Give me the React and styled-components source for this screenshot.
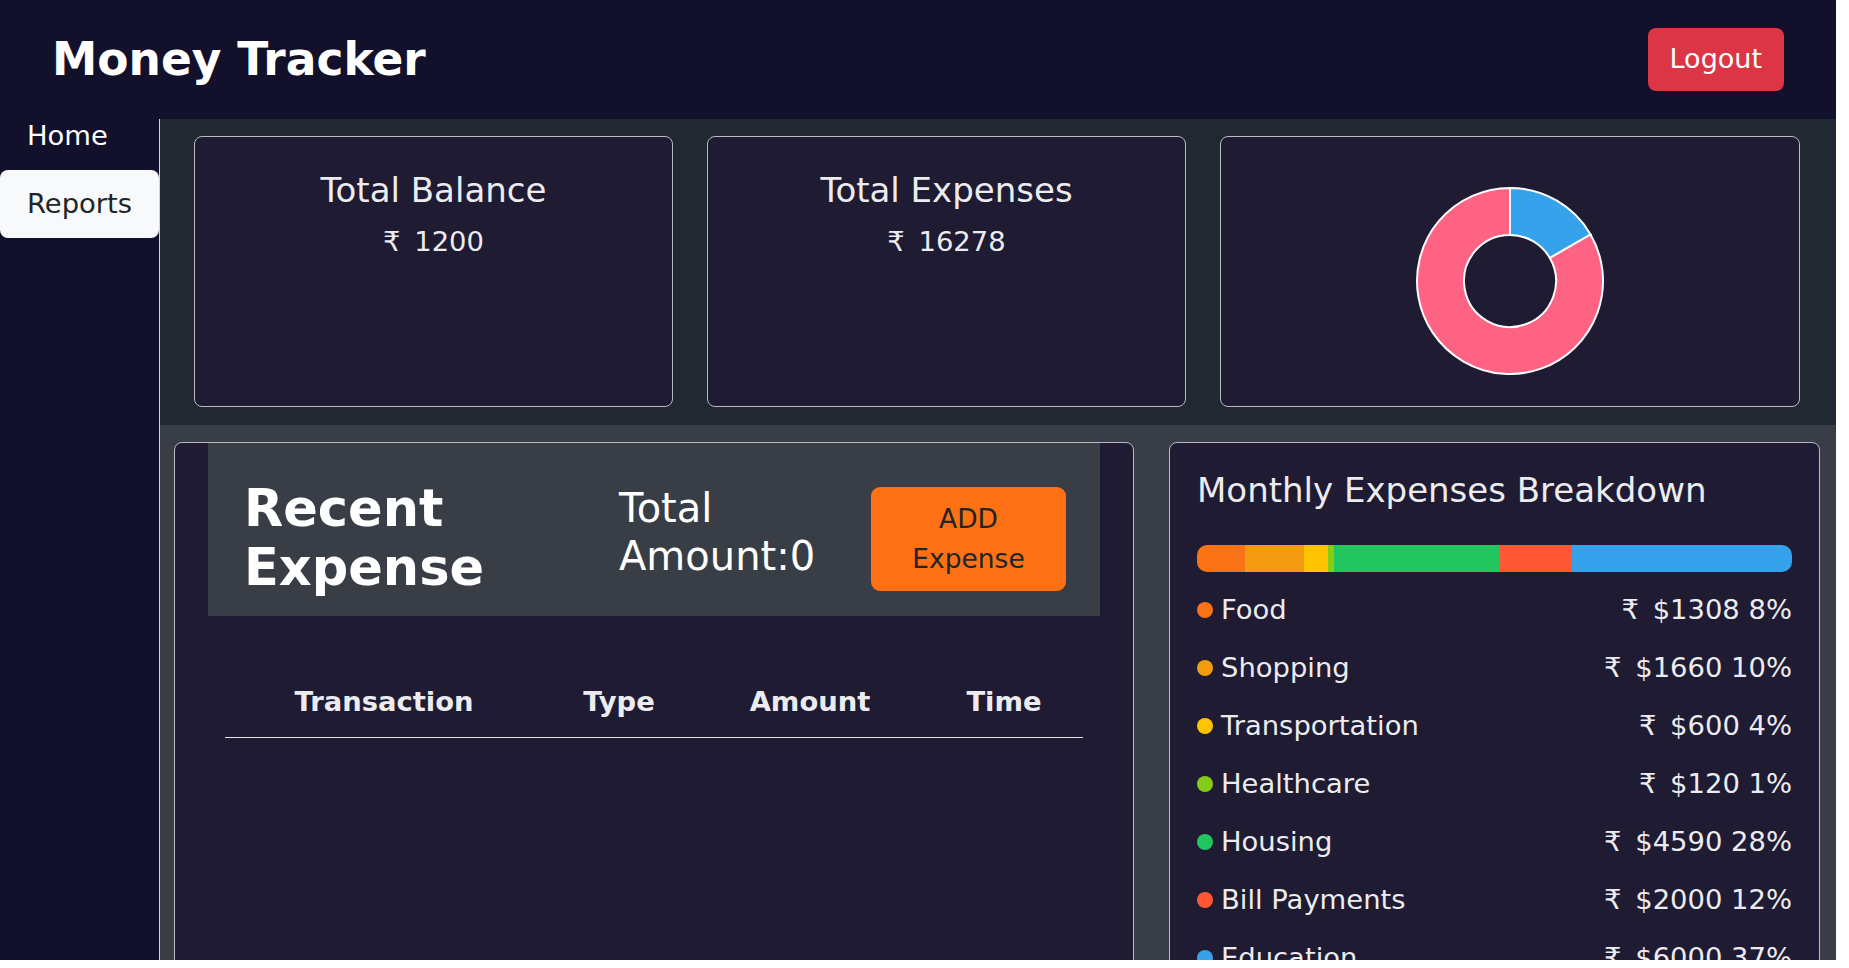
import React from "react";
import styled, { createGlobalStyle } from "styled-components";

const categories = [
  { name: "Food", amount: 1308, pct: 8, color: "#f97316" },
  { name: "Shopping", amount: 1660, pct: 10, color: "#f39c12" },
  { name: "Transportation", amount: 600, pct: 4, color: "#ffc300" },
  { name: "Healthcare", amount: 120, pct: 1, color: "#84cc16" },
  { name: "Housing", amount: 4590, pct: 28, color: "#22c55e" },
  { name: "Bill Payments", amount: 2000, pct: 12, color: "#ff5733" },
  { name: "Education", amount: 6000, pct: 37, color: "#36a2eb" },
];

const donut = [
  { value: 1200, color: "#36a2eb" },
  { value: 6000, color: "#ff6384" },
];

const GlobalStyle = createGlobalStyle`
  body {
    margin: 0;
    background: #ffffff;
    font-family: "DejaVu Sans", Verdana, sans-serif;
    font-size: 27.4px;
  }
  * { box-sizing: border-box; }
`;

function point(cx, cy, r, deg) {
  const a = (deg * Math.PI) / 180;
  return [cx + r * Math.sin(a), cy - r * Math.cos(a)];
}

function arcPath(cx, cy, R, r, start, end) {
  const large = end - start > 180 ? 1 : 0;
  const [x1, y1] = point(cx, cy, R, start);
  const [x2, y2] = point(cx, cy, R, end);
  const [x3, y3] = point(cx, cy, r, end);
  const [x4, y4] = point(cx, cy, r, start);
  return `M${x1} ${y1} A${R} ${R} 0 ${large} 1 ${x2} ${y2} L${x3} ${y3} A${r} ${r} 0 ${large} 0 ${x4} ${y4} Z`;
}

function Doughnut() {
  const total = donut.reduce((s, d) => s + d.value, 0);
  let angle = 0;
  return (
    <svg width="190" height="190" viewBox="0 0 190 190">
      {donut.map((d, i) => {
        const start = angle;
        angle += (d.value / total) * 360;
        return (
          <path
            key={i}
            d={arcPath(95, 95, 93, 46, start, angle)}
            fill={d.color}
            stroke="#ffffff"
            strokeWidth="2"
          />
        );
      })}
    </svg>
  );
}

export default function App() {
  return (
    <>
      <GlobalStyle />
      <Page>
        <Header>
          <Brand>Money Tracker</Brand>
          <LogoutButton>Logout</LogoutButton>
        </Header>
        <Body>
          <Sidebar>
            <NavItem>Home</NavItem>
            <NavItem active>Reports</NavItem>
          </Sidebar>
          <Main>
            <SummaryRow>
              <StatCard>
                <StatTitle>Total Balance</StatTitle>
                <StatValue>
                  <Rupee>₹</Rupee> 1200
                </StatValue>
              </StatCard>
              <StatCard>
                <StatTitle>Total Expenses</StatTitle>
                <StatValue>
                  <Rupee>₹</Rupee> 16278
                </StatValue>
              </StatCard>
              <ChartCard>
                <Doughnut />
              </ChartCard>
            </SummaryRow>
            <DetailRow>
              <ExpenseCard>
                <ExpenseHeader>
                  <ExpenseTitle>Recent Expense</ExpenseTitle>
                  <TotalAmount>Total Amount:0</TotalAmount>
                  <AddButton>ADD Expense</AddButton>
                </ExpenseHeader>
                <Table>
                  <thead>
                    <tr>
                      <Th w={318}>Transaction</Th>
                      <Th w={152}>Type</Th>
                      <Th w={230}>Amount</Th>
                      <Th w={158}>Time</Th>
                    </tr>
                  </thead>
                  <tbody></tbody>
                </Table>
              </ExpenseCard>
              <BreakdownCard>
                <BreakdownTitle>Monthly Expenses Breakdown</BreakdownTitle>
                <Bar>
                  {categories.map((c) => (
                    <Segment
                      key={c.name}
                      color={c.color}
                      style={{ width: `${c.pct}%` }}
                    />
                  ))}
                </Bar>
                {categories.map((c) => (
                  <CategoryRow key={c.name}>
                    <CategoryName>
                      <Dot color={c.color} />
                      {c.name}
                    </CategoryName>
                    <span>
                      <Rupee>₹</Rupee> ${c.amount} {c.pct}%
                    </span>
                  </CategoryRow>
                ))}
              </BreakdownCard>
            </DetailRow>
          </Main>
        </Body>
      </Page>
    </>
  );
}

const Page = styled.div`
  width: 1836px;
  height: 960px;
  overflow: hidden;
  display: flex;
  flex-direction: column;
  background: #12102a;
`;

const Header = styled.header`
  height: 119px;
  flex-shrink: 0;
  display: flex;
  align-items: center;
  justify-content: space-between;
  padding: 0 52px;
  background: #12102a;
`;

const Brand = styled.h1`
  margin: 0;
  font-size: 45.5px;
  font-weight: bold;
  color: #ffffff;
`;

const LogoutButton = styled.button`
  font-family: inherit;
  font-size: 27px;
  line-height: 1.5;
  padding: 11px 22px;
  border: none;
  border-radius: 8px;
  background: #dc3545;
  color: #ffffff;
`;

const Body = styled.div`
  flex: 1;
  display: flex;
  min-height: 0;
`;

const Sidebar = styled.nav`
  width: 160px;
  flex-shrink: 0;
  border-right: 1px solid #d6d6dc;
  background: #12102a;
`;

const NavItem = styled.div`
  padding: ${(p) => (p.active ? "14px 27px" : "0 27px 18px")};
  line-height: ${(p) => (p.active ? "40px" : "33px")};
  background: ${(p) => (p.active ? "#f8f9fa" : "transparent")};
  color: ${(p) => (p.active ? "#212529" : "#ffffff")};
  border-radius: 8px;
`;

const Main = styled.main`
  flex: 1;
  display: flex;
  flex-direction: column;
  min-width: 0;
`;

const SummaryRow = styled.section`
  display: grid;
  grid-template-columns: 479px 479px 1fr;
  gap: 34px;
  padding: 17px 36px 18px 34px;
  background: #222831;
`;

const Card = styled.div`
  background: #1e1b32;
  border: 1px solid #b9b9c2;
  border-radius: 8px;
`;

const StatCard = styled(Card)`
  height: 271px;
  padding-top: 33px;
  text-align: center;
  color: #ececf0;
`;

const StatTitle = styled.h2`
  margin: 0 0 10px;
  font-size: 34px;
  font-weight: normal;
  line-height: 1.2;
`;

const StatValue = styled.div`
  line-height: 1.5;
`;

const Rupee = styled.span`
  margin-right: 5px;
`;

const ChartCard = styled(Card)`
  height: 271px;
  display: flex;
  justify-content: center;
  align-items: center;
  padding-top: 19px;
`;

const DetailRow = styled.section`
  flex: 1;
  display: grid;
  grid-template-columns: 960px 651px;
  gap: 35px;
  padding: 17px 16px 0 14px;
  background: #393e46;
  overflow: hidden;
`;

const ExpenseCard = styled(Card)`
  min-height: 640px;
  padding: 0 33px;
`;

const ExpenseHeader = styled.div`
  height: 173px;
  display: grid;
  grid-template-columns: 375px 252px 195px;
  align-items: center;
  padding: 18px 0 0 36px;
  background: #393e46;
  color: #ffffff;
`;

const ExpenseTitle = styled.h2`
  margin: 0;
  font-size: 51px;
  font-weight: bold;
  line-height: 1.15;
`;

const TotalAmount = styled.div`
  margin-bottom: 14px;
  font-size: 40px;
  line-height: 1.2;
`;

const AddButton = styled.button`
  height: 104px;
  padding: 0 12px;
  font-family: inherit;
  font-size: 26.5px;
  line-height: 1.5;
  border: none;
  border-radius: 9px;
  background: #fd7014;
  color: #212529;
`;

const Table = styled.table`
  width: 858px;
  margin: 51px 17px 0;
  border-collapse: collapse;
  color: #ececf0;
`;

const Th = styled.th`
  width: ${(p) => p.w}px;
  padding: 15px 8px;
  line-height: 40px;
  font-weight: bold;
  text-align: center;
  border-bottom: 1px solid #e4e4ea;
`;

const BreakdownCard = styled(Card)`
  min-height: 640px;
  padding: 27px 27px 0;
  color: #ececf0;
`;

const BreakdownTitle = styled.h3`
  margin: 0 0 34px;
  font-size: 34px;
  font-weight: normal;
  line-height: 1.2;
`;

const Bar = styled.div`
  display: flex;
  height: 27px;
  margin-bottom: 18px;
  border-radius: 10px;
  overflow: hidden;
`;

const Segment = styled.div`
  height: 100%;
  background: ${(p) => p.color};
`;

const CategoryRow = styled.div`
  display: flex;
  justify-content: space-between;
  align-items: center;
  height: 40px;
  margin-bottom: 18px;
`;

const CategoryName = styled.span`
  display: flex;
  align-items: center;
`;

const Dot = styled.span`
  width: 16px;
  height: 16px;
  margin-right: 8px;
  border-radius: 50%;
  background: ${(p) => p.color};
`;
